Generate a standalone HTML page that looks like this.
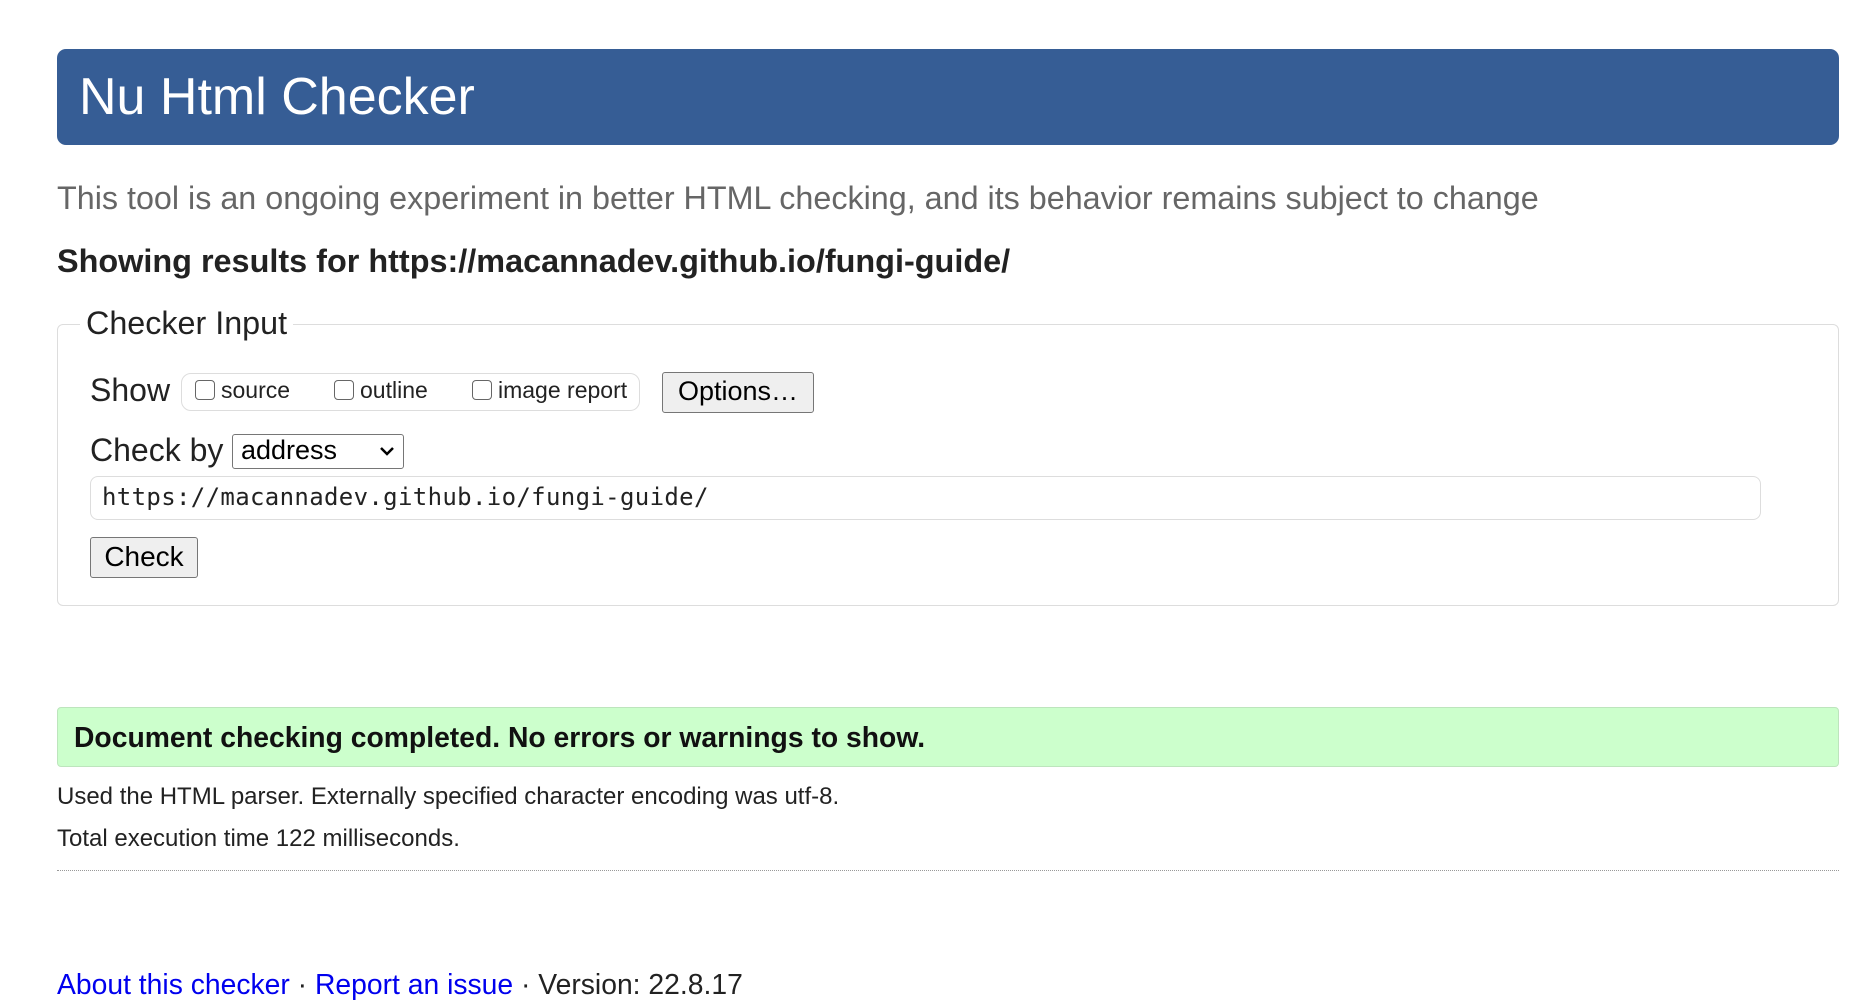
<!DOCTYPE html>
<html><head><meta charset="utf-8"><style>
html,body{margin:0;padding:0;background:#fff;width:1874px;height:980px;overflow:hidden;font-family:"Liberation Sans",Arial,sans-serif;color:#000}
.a{position:absolute;white-space:nowrap}
#hdr{left:57px;top:49px;width:1782px;height:96px;background:#365d95;border-radius:9px}
#hdr span{position:absolute;left:22px;top:18px;font-size:52px;color:#fff}
.cb{display:inline-block;width:20px;height:20px;border:1.5px solid #666;border-radius:4px;box-sizing:border-box;vertical-align:-2px;margin-right:6px;background:#fff}
.btn{background:#efefef;border:1.5px solid #767676;border-radius:3px;box-sizing:border-box;font-size:27px;text-align:center}
</style></head><body>
<div class="a" id="hdr"><span>Nu Html Checker</span></div>
<div class="a" style="left:57px;top:180px;font-size:32.3px;color:#666">This tool is an ongoing experiment in better HTML checking, and its behavior remains subject to change</div>
<div class="a" style="left:57px;top:243px;font-size:32.4px;font-weight:bold;color:#222">Showing results for https://macannadev.github.io/fungi-guide/</div>
<div class="a" style="left:57px;top:324px;width:1782px;height:282px;border:1.5px solid #ddd;border-radius:6px;box-sizing:border-box"></div>
<div class="a" style="left:80px;top:305px;font-size:32.3px;background:#fff;padding:0 6px;color:#222">Checker Input</div>
<div class="a" style="left:90px;top:372px;font-size:32px;color:#222">Show</div>
<div class="a" style="left:181px;top:373px;width:459px;height:38px;border:1.5px solid #ddd;border-radius:10px;box-sizing:border-box"></div>
<div class="a" style="left:195px;top:377px;font-size:23px;color:#222"><span class="cb"></span>source</div>
<div class="a" style="left:334px;top:377px;font-size:23px;color:#222"><span class="cb"></span>outline</div>
<div class="a" style="left:472px;top:377px;font-size:23px;color:#222"><span class="cb"></span>image report</div>
<div class="a btn" style="left:662px;top:372px;width:152px;height:41px;line-height:37px">Options…</div>
<div class="a" style="left:90px;top:432px;font-size:32px;color:#222">Check by</div>
<div class="a" style="left:232px;top:434px;width:172px;height:35px;border:1.5px solid #767676;border-radius:3px;box-sizing:border-box;font-size:27px;line-height:31px;padding-left:8px">address
<svg style="position:absolute;right:8px;top:11px" width="16" height="11" viewBox="0 0 16 11"><path d="M2 2l6 6 6-6" fill="none" stroke="#000" stroke-width="2.5"/></svg></div>
<div class="a" style="left:90px;top:476px;width:1678px;height:44px;border:1.5px solid #ddd;border-radius:8px;box-sizing:border-box;width:1671px"></div>
<div class="a" style="left:102px;top:483px;font-family:'DejaVu Sans Mono','Liberation Mono',monospace;font-size:24px;color:#222;letter-spacing:0.35px">https://macannadev.github.io/fungi-guide/</div>
<div class="a btn" style="left:90px;top:537px;width:108px;height:41px;line-height:37px;font-size:28px">Check</div>
<div class="a" style="left:57px;top:707px;width:1782px;height:60px;background:#ccffcc;border:1.5px solid #bde5bd;border-radius:4px;box-sizing:border-box"></div>
<div class="a" style="left:74px;top:721px;font-size:28.3px;font-weight:bold;color:#111">Document checking completed. No errors or warnings to show.</div>
<div class="a" style="left:57px;top:783px;font-size:24px;color:#222">Used the HTML parser. Externally specified character encoding was utf-8.</div>
<div class="a" style="left:57px;top:825px;font-size:24px;color:#222">Total execution time 122 milliseconds.</div>
<div class="a" style="left:57px;top:870px;width:1782px;border-top:1.5px dotted #999"></div>
<div class="a" style="left:57px;top:968px;font-size:28.3px;color:#222"><span style="color:#00e">About this checker</span> · <span style="color:#00e">Report an issue</span> · Version: 22.8.17</div>
</body></html>
